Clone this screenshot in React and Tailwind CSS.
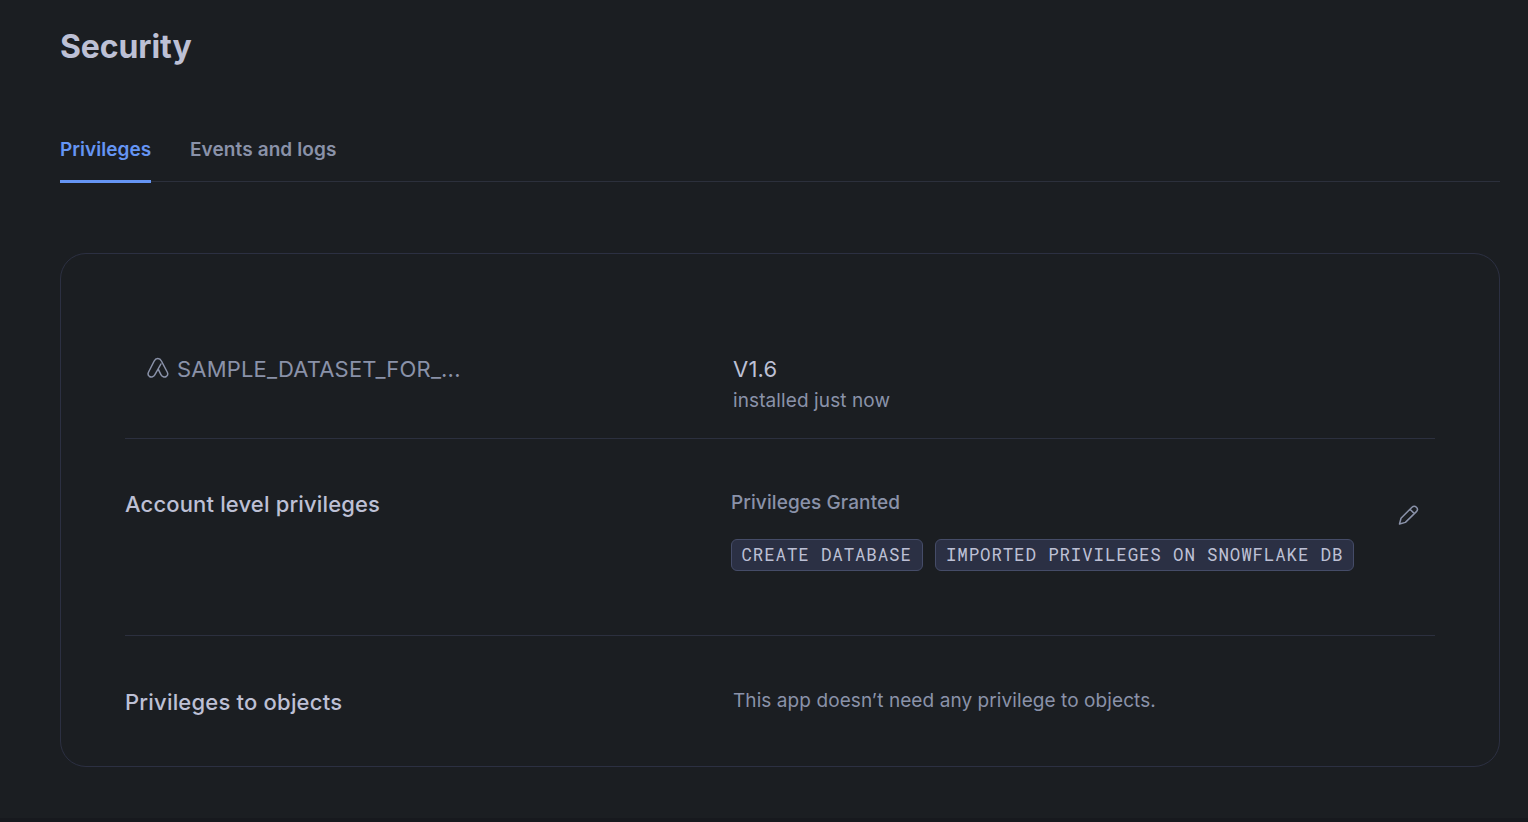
export default function App() {
  return (
    <main className="flex h-[822px] flex-col border-b-4 border-[#17191e] bg-[#1b1e22] pl-[60px] pr-7 font-['Inter',sans-serif] text-[#bdc0d5]">
      <h1 className="mt-[27px] h-10 text-[32px] leading-10 font-bold tracking-[-0.1px]">Security</h1>
      <nav className="mt-[67px] flex h-[48px] gap-[39px] border-b border-[#2c303c] text-[19px] leading-8 font-semibold">
        <span className="-mb-[2px] h-[49px] w-[91px] border-b-[3px] border-[#6595f4] tracking-[0.03px] text-[#6595f4]">Privileges</span>
        <span className="tracking-[0.1px] text-[#8a92a9]">Events and logs</span>
      </nav>
      <section className="mt-[71px] flex h-[514px] flex-col rounded-[26px] border border-[#2c3042] px-16">
        <div className="flex h-[185px] border-b border-[#2c303f] pt-[99px]">
          <div className="flex w-[608px] gap-2 pl-[22px] text-[22px] leading-8 text-[#8a92a9]">
            <svg className="mt-[4px]" width="22" height="22" viewBox="0 0 22 22" fill="none" stroke="currentColor" strokeWidth="1.5" strokeLinecap="round" strokeLinejoin="round">
              <path d="M13.9 7 7.9 17.6C6.8 19.8 4.3 20.6 2.5 19.5 1 18.5.8 16.6 1.6 15L7.2 4C8.8.7 12.8.7 14.4 4L20.2 15C21 16.6 20.8 18.5 19.3 19.5 17.5 20.6 15 19.8 13.9 17.6L11.2 12.2" />
            </svg>
            <span className="tracking-[0.18px]">SAMPLE_DATASET_FOR_...</span>
          </div>
          <div>
            <div className="text-[22px] leading-8 tracking-[0.2px]">V1.6</div>
            <div className="text-[19px] leading-8 tracking-[0.1px] text-[#8a92a9]">installed just now</div>
          </div>
        </div>
        <div className="flex h-[197px] border-b border-[#2c303f] pt-[49px]">
          <h2 className="w-[606px] text-[22px] leading-8 font-medium tracking-[0.15px]">Account level privileges</h2>
          <div className="w-[623px]">
            <div className="h-[51px] text-[19px] leading-[30px] font-medium tracking-[0.1px] text-[#8a92a9]">Privileges Granted</div>
            <div className="flex gap-3 font-['Roboto_Mono','DejaVu_Sans_Mono',monospace] text-[17.5px] leading-[29px] tracking-[0.85px] whitespace-nowrap">
              <span className="h-8 w-48 rounded-md border border-[#454c68] bg-[#2b3044] pl-[9.5px]">CREATE DATABASE</span>
              <span className="h-8 w-[419px] rounded-md border border-[#454c68] bg-[#2b3044] pl-[10px]">IMPORTED PRIVILEGES ON SNOWFLAKE DB</span>
            </div>
          </div>
          <button aria-label="Edit privileges" className="mt-4 ml-11 size-[22px] text-[#8a92a9]">
            <svg width="22" height="22" viewBox="0 0 22 22" fill="none" stroke="currentColor" strokeWidth="1.5" strokeLinejoin="round">
              <path d="M1.5 20 3 14.2 14 3.2C15.4 1.8 17 1.8 18.4 3.2 19.8 4.6 19.8 6.2 18.4 7.6L7.4 18.4Z M12 5.2 16.4 9.6" />
            </svg>
          </button>
        </div>
        <div className="flex pt-[50px]">
          <h2 className="w-[608px] text-[22px] leading-8 font-medium tracking-[0.2px]">Privileges to objects</h2>
          <p className="text-[19px] leading-[30px] tracking-[0.08px] text-[#8a92a9]">This app doesn’t need any privilege to objects.</p>
        </div>
      </section>
    </main>
  )
}
